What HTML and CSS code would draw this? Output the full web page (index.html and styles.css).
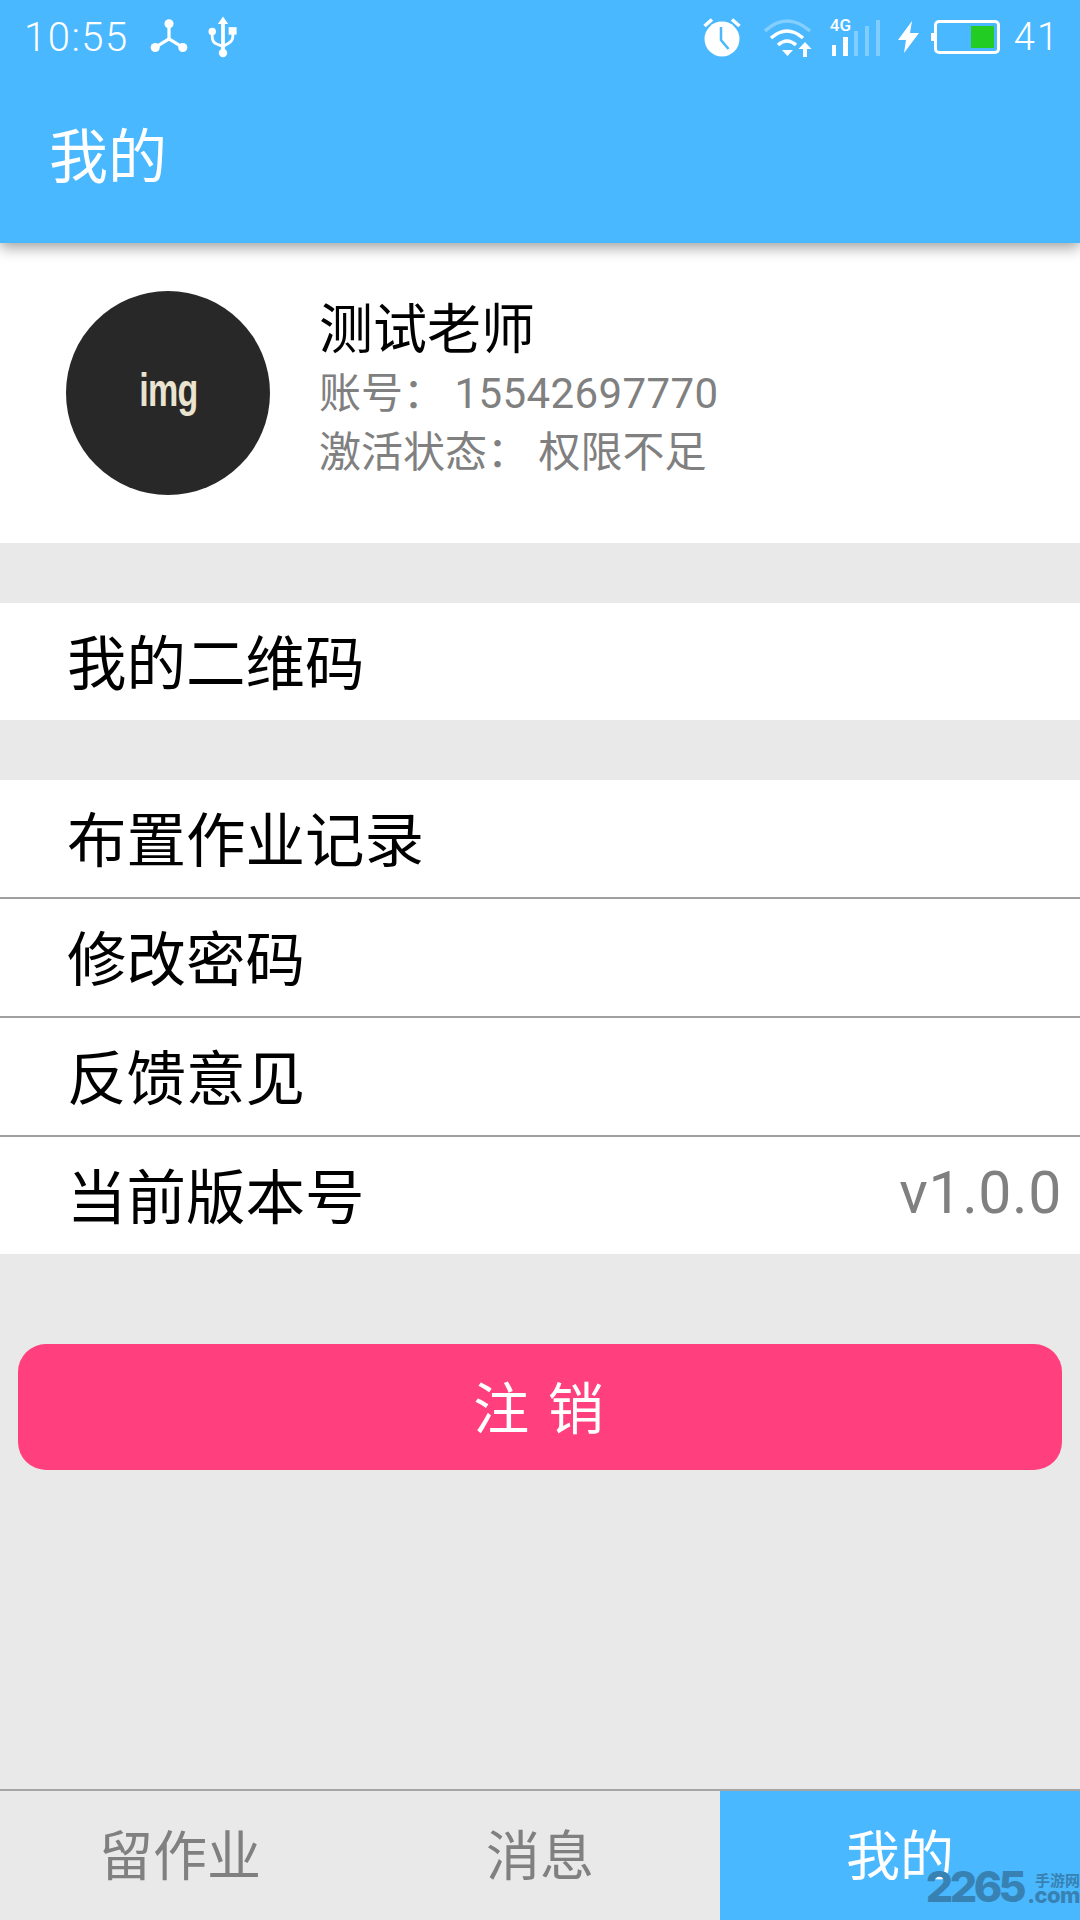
FILE: index.html
```html
<!DOCTYPE html>
<html lang="zh-CN">
<head>
<meta charset="utf-8">
<title>我的</title>
<link rel="stylesheet" href="styles.css">
</head>
<body>
<div class="app">
  <header class="appbar">
    <div class="status">
      <div class="status-left">
        <span class="time">10:55</span>
        <svg class="ic-hub" viewBox="0 0 40 40"><g fill="#fff"><circle cx="20" cy="6" r="4.800"/><circle cx="5.500" cy="31" r="4.800"/><circle cx="34.500" cy="31" r="4.800"/></g><path d="M20 6v16M20 22L5.500 31M20 22l14.500 9" stroke="#fff" stroke-width="3.400" fill="none"/></svg>
        <svg class="ic-usb" viewBox="0 0 32 46"><path d="M16 1l5.500 8H18v27h-4V9h-3.500z" fill="#fff"/><circle cx="16" cy="40" r="4.500" fill="#fff"/><circle cx="4.500" cy="17" r="4" fill="#fff"/><rect x="22" y="12.500" width="8.500" height="8" fill="#fff"/><path d="M4.500 17v6q0 6 6 8l5.500 2 5.500-3q5-2.500 5-8v-4" fill="none" stroke="#fff" stroke-width="3"/></svg>
      </div>
      <div class="status-right">
        <svg class="ic-alarm" viewBox="0 0 38 40"><circle cx="19" cy="22" r="17.500" fill="#fff"/><path d="M1.500 9L9 2.500M36.500 9L29 2.500" stroke="#fff" stroke-width="3.500"/><path d="M18 10v13l7.500 9" fill="none" stroke="#4ab8ff" stroke-width="2.500"/></svg>
        <svg class="ic-wifi" viewBox="0 0 48 40"><path d="M1 14Q23-6 46 14" fill="none" stroke="#fff" stroke-opacity=".32" stroke-width="3.500"/><path d="M7 21Q23 7 39 21" fill="none" stroke="#fff" stroke-width="3.500"/><path d="M14 28q9-8 18 0" fill="none" stroke="#fff" stroke-width="3.500"/><path d="M18 33h11l-5.500 6z" fill="#fff"/><path d="M41 25l6.500 7H43v8h-4v-8h-4.500z" fill="#fff"/></svg>
        <div class="signal">
          <span class="net">4G</span>
          <svg class="ic-bars" viewBox="0 0 50 37"><rect x="2" y="25" width="4" height="11" fill="#fff"/><rect x="13" y="17" width="5" height="19" fill="#fff"/><rect x="24" y="11" width="4" height="25" fill="#fff" fill-opacity=".3"/><rect x="35" y="6" width="4" height="30" fill="#fff" fill-opacity=".3"/><rect x="46" y="0" width="4" height="36" fill="#fff" fill-opacity=".3"/></svg>
        </div>
        <svg class="ic-bolt" viewBox="0 0 22 32"><path d="M14 0L0 19h8L6 32l15-20h-9z" fill="#fff"/></svg>
        <div class="battery"><span class="batt-fill"></span></div>
        <span class="level">41</span>
      </div>
    </div>
    <h1 class="title">我的</h1>
  </header>

  <section class="profile">
    <div class="avatar"><span class="avatar-text">img</span></div>
    <div class="info">
      <div class="name">测试老师</div>
      <div class="meta meta-a">账号： <span class="num">15542697770</span></div>
      <div class="meta">激活状态： 权限不足</div>
    </div>
  </section>

  <section class="group">
    <div class="row">我的二维码</div>
  </section>

  <section class="group">
    <div class="row">布置作业记录</div>
    <div class="row line">修改密码</div>
    <div class="row line">反馈意见</div>
    <div class="row line last"><span>当前版本号</span><span class="version">v1.0.0</span></div>
  </section>

  <button class="logout">注 销</button>

  <nav class="tabs">
    <div class="tab">留作业</div>
    <div class="tab">消息</div>
    <div class="tab active">我的</div>
  </nav>

  <div class="mark"><span class="mark-num">2265</span><span class="mark-side"><span class="mark-cn">手游网</span><span class="mark-com">.com</span></span></div>
</div>
</body>
</html>
```

FILE: styles.css
```css
* { box-sizing: border-box; }
html, body { margin: 0; padding: 0; }
body { font-family: "Roboto", "Noto Sans CJK SC", sans-serif; }
.app { position: relative; width: 1080px; height: 1920px; background: #e9e9e9; display: flex; flex-direction: column; overflow: hidden; }

.appbar { height: 243px; background: #4ab8ff; color: #fff; box-shadow: 0 4px 14px rgba(0,0,0,.4); position: relative; z-index: 1; flex: none; }
.status { height: 74px; display: flex; justify-content: space-between; align-items: center; padding: 0 20px 0 24px; }
.status-left, .status-right { display: flex; align-items: center; }
.time { font-size: 40px; font-weight: 300; letter-spacing: 1.500px; margin-right: 21px; }
.ic-hub { width: 38px; height: 38px; margin-right: 20px; }
.ic-usb { width: 30px; height: 44px; }
.ic-alarm { width: 38px; height: 40px; margin-right: 23px; }
.ic-wifi { width: 48px; height: 40px; margin-right: 18px; }
.signal { position: relative; width: 50px; height: 40px; margin-right: 18px; }
.net { position: absolute; left: 0; top: -2px; font-size: 17px; font-weight: 500; }
.ic-bars { position: absolute; left: 0; bottom: 0; width: 50px; height: 37px; }
.ic-bolt { width: 22px; height: 32px; margin-right: 14px; }
.battery { position: relative; width: 66px; height: 34px; border: 3px solid #fff; border-radius: 5px; padding: 3px; display: flex; justify-content: flex-end; margin-right: 14px; }
.battery::before { content: ""; position: absolute; left: -6px; top: 10px; width: 3px; height: 8px; background: #fff; }
.batt-fill { width: 23px; background: #22cc22; }
.level { font-size: 38px; font-weight: 300; letter-spacing: 2px; }
.title { margin: 0; padding: 36px 0 0 49px; font-size: 59px; font-weight: 400; line-height: 86px; font-family: "Noto Sans CJK SC", sans-serif; }

.profile { height: 300px; background: #fff; display: flex; align-items: center; padding-left: 66px; flex: none; }
.avatar { width: 204px; height: 204px; border-radius: 50%; background: #282828; display: flex; align-items: center; justify-content: center; margin-right: 49px; }
.avatar-text { font-family: "Liberation Sans", sans-serif; font-weight: 700; font-size: 46px; letter-spacing: -1px; color: #e9e3d0; transform: scaleX(.74); position: relative; top: -3px; }
.info { font-family: "Noto Sans CJK SC", sans-serif; padding-bottom: 16px; }
.name { font-size: 54px; line-height: 64px; color: #000; margin-bottom: 4px; }
.meta { font-size: 42px; line-height: 56px; color: #808080; }
.meta-a { line-height: 55px; }
.num { font-family: "Roboto", sans-serif; letter-spacing: .4px; }

.group { margin-top: 60px; background: #fff; flex: none; }
.row { height: 117px; padding: 0 18px 6px 67px; display: flex; align-items: center; justify-content: space-between; font-size: 59.500px; color: #000; font-family: "Noto Sans CJK SC", sans-serif; background: #fff; }
.line { height: 119px; border-top: 2px solid #a0a0a0; }
.version { font-family: "Roboto", sans-serif; font-size: 59px; letter-spacing: .6px; color: #808080; }

.logout { margin: 90px 18px 0; height: 126px; border: 0; border-radius: 28px; padding: 0 0 6px; background: #ff3f7e; color: #fff; font-family: "Noto Sans CJK SC", sans-serif; font-size: 56px; letter-spacing: 3px; flex: none; }

.tabs { margin-top: auto; height: 131px; display: flex; border-top: 2px solid #a5a5a5; flex: none; font-family: "Noto Sans CJK SC", sans-serif; }
.tab { flex: 1; display: flex; align-items: center; justify-content: center; padding-bottom: 6px; font-size: 54px; color: #808080; }
.tab.active { background: #4ab8ff; color: #fff; }

.mark { position: absolute; right: 0; bottom: 17px; display: flex; align-items: flex-end; color: #3782b3; font-family: "Inter", sans-serif; font-weight: 800; }
.mark-num { font-size: 43px; line-height: 33px; letter-spacing: -3.500px; }
.mark-side { display: flex; flex-direction: column; align-items: flex-end; margin-left: 4px; }
.mark-cn { font-family: "Noto Sans CJK SC", sans-serif; font-size: 15px; line-height: 15px; font-weight: 700; }
.mark-com { font-size: 22px; line-height: 16px; letter-spacing: -.5px; }
```
